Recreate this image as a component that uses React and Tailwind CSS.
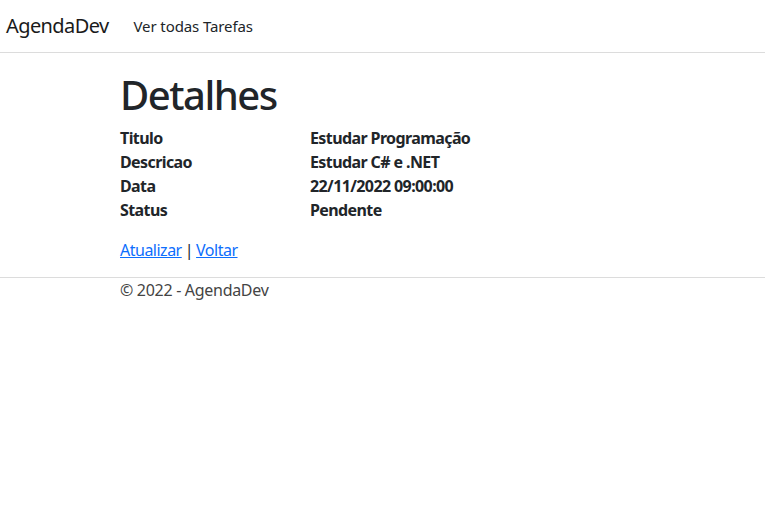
import React from 'react';

const detalhes = [
  { label: 'Titulo', value: 'Estudar Programação' },
  { label: 'Descricao', value: 'Estudar C# e .NET' },
  { label: 'Data', value: '22/11/2022 09:00:00' },
  { label: 'Status', value: 'Pendente' },
];

const App = () => {
  return (
    <div className="min-h-screen bg-white text-[#212529] text-[16px] leading-6 [font-family:'Noto_Sans','Open_Sans',sans-serif]">
      {/* Navbar */}
      <header className="h-[53px] border-b border-[#dcdcdc] flex items-center pl-[6px]">
        <span className="text-[20px] tracking-[-0.6px] text-[#1a1a1a] mr-[25px]">AgendaDev</span>
        <a className="text-[15px] tracking-[-0.1px] text-[#212529]">Ver todas Tarefas</a>
      </header>

      {/* Conteudo */}
      <main className="pl-[120px] pb-[15px]">
        <h1 className="text-[40px] leading-[1.2] tracking-[-1.5px] font-medium mt-[18px] mb-[7px]">Detalhes</h1>
        <dl className="mb-4 tracking-[-0.6px]">
          {detalhes.map((item) => (
            <div key={item.label} className="flex font-bold">
              <dt className="w-[190px]">{item.label}</dt>
              <dd>{item.value}</dd>
            </div>
          ))}
        </dl>
        <div className="tracking-[-0.5px]">
          <a href="#" className="text-[#0d6efd] underline">Atualizar</a>
          <span className="mx-[3px]">|</span>
          <a href="#" className="text-[#0d6efd] underline">Voltar</a>
        </div>
      </main>

      {/* Rodape */}
      <footer className="border-t border-[#dcdcdc] pl-[120px] tracking-[-0.3px] text-[#444]">
        © 2022 - AgendaDev
      </footer>
    </div>
  );
};

export default App;
